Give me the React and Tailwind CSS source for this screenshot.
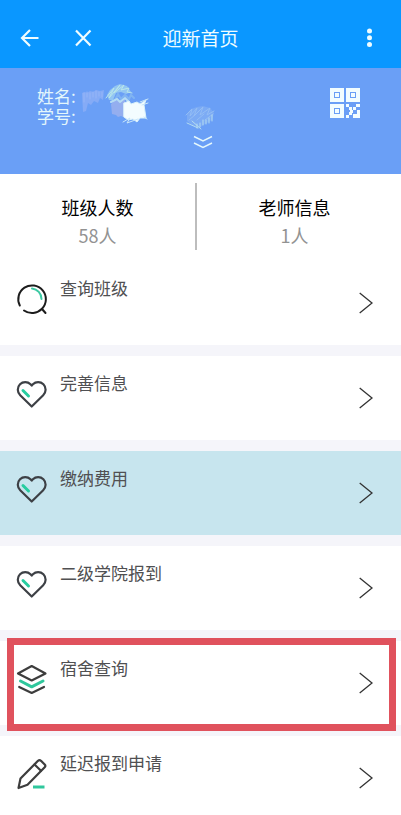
import React from "react";

const menus = [
     { name: "查询班级", icon: SearchIcon },
     { name: "完善信息", icon: HeartIcon },
     { name: "缴纳费用", icon: HeartIcon, active: true },
     { name: "二级学院报到", icon: HeartIcon },
     { name: "宿舍查询", icon: LayersIcon, marked: true },
     { name: "延迟报到申请", icon: PencilIcon },
];

function SearchIcon() {
     return (
          <svg viewBox="0 0 32 32" className="h-8 w-8" fill="none" stroke="#1c1c1c" strokeWidth="2" strokeLinecap="round">
               <path d="M3.800 22.500A13.800 13.800 0 1 1 26 25.800A13.800 13.800 0 0 1 8 27.500" />
               <path d="M26 26L29.500 30" />
               <path d="M16 5.500A10.500 10.500 0 0 1 25.500 16" stroke="#3cc9a3" strokeWidth="2" />
          </svg>
     )
}

function HeartIcon() {
     return (
          <svg viewBox="0 0 32 32" className="h-8 w-8" fill="none" stroke="#3d4045" strokeWidth="2.2" strokeLinecap="round" strokeLinejoin="round">
               <path d="M15.700 28.500L4.200 17.200A7.600 7.600 0 0 1 4 6.300A7.500 7.500 0 0 1 14.500 6.300L15.700 7.600L16.900 6.300A7.500 7.500 0 0 1 27.400 6.300A7.600 7.600 0 0 1 27.200 17.200Z" />
               <path d="M7 12.500L12.500 18" stroke="#27cda0" strokeWidth="3" />
          </svg>
     )
}

function LayersIcon() {
     return (
          <svg viewBox="0 0 32 32" className="h-8 w-8" fill="none" stroke="#3d3d3d" strokeWidth="2.2" strokeLinecap="round" strokeLinejoin="round">
               <path d="M15.700 3L29.500 10.500L15.700 17.500L2 10.500Z" />
               <path d="M4.500 18L15.700 23.800L27 18" stroke="#2fc79c" strokeWidth="3" />
               <path d="M3.200 24L15.700 30L28 24" />
          </svg>
     )
}

function PencilIcon() {
     return (
          <svg viewBox="0 0 32 32" className="h-8 w-8" fill="none" stroke="#3d3d3d" strokeWidth="2.2" strokeLinecap="round" strokeLinejoin="round">
               <path d="M2.500 30L4.500 20.500L22 2.800Q23.500 1.500 25 2.800L28.700 6.500Q30 8 28.700 9.300L11.500 26.800Z" />
               <path d="M18.500 6.500L25 12.800" />
               <path d="M17 29H28.500" stroke="#2fc79c" strokeWidth="3" strokeLinecap="butt" />
          </svg>
     )
}

function QrIcon() {
     return (
          <svg viewBox="0 0 30 30" className="h-[30px] w-[30px]" fill="#f2fdff" shapeRendering="crispEdges">
               <path fillRule="evenodd" d="M0 0H14V14H0ZM4 4V10H10V4ZM16 0H30V14H16ZM20 4V10H26V4ZM0 16H14V30H0ZM4 20V26H10V20Z" />
               <path d="M5 5H9V9H5ZM21 5H25V9H21ZM5 21H9V25H5Z" />
               <path d="M16 16H19V19H16ZM19 19H22V22H23V25H22V27H19V24H20V22H19ZM26 16H30V19H26ZM23 19H26V22H23ZM16 27H19V30H16ZM27 22H30V30H23V26H27Z" />
          </svg>
     )
}

/* brush strokes that hide the student's name and number */
function Scribble() {
     return (
          <svg viewBox="0 0 140 56" className="h-14 w-[140px]" fill="none" strokeLinecap="round">
               <path d="M2 13L5 12L7 13L10 11L13 12L16 10L20 11L24 10L23 20L20 18L18 23L14 21L11 25L8 23L6 31L3 32Z" fill="#85abf6" />
               <path d="M4 22V13M7 17V12M10 19V13M13 17V12M16 18V11M19 16V12M22 17V12" stroke="#95b5f7" strokeWidth="1" />
               <path d="M29 20L27 15L30 10L35 6L40 4L47 6L51 12L46 14L41 12L36 13L33 20Z" fill="#93c6f2" />
               <path d="M26 18L34 8L29 18L40 5L34 13L44 5L41 10L49 8L47 12L52 13" stroke="#b9e6ea" strokeWidth="1" />
               <path d="M35 20L38 14L41 19L45 15L49 19L51 15L54 18" stroke="#80b4f2" strokeWidth="2" />
               <path d="M31 24L34 21L45 20L45 38L41 36L38 37L36 35L32 34Z" fill="#94aeef" />
               <path d="M31 22L37 19L40 22L45 18L49 22" stroke="#b6dcf4" strokeWidth="2" />
               <path d="M44 23L49 21L51 24L57 22L60 24L66 20L64 25L66 38L60 38L57 42L53 39L48 40L44 37Z" fill="#f3fcff" stroke="#d9f1fb" strokeWidth="1" />
               <path d="M43 42L50 38L47 43L58 39M60 22L68 19M62 25L68 23M64 37L67 39" stroke="#c9e7fa" strokeWidth="1" />
               <path d="M107 34L111 29L117 27L123 26L130 28L134 33L132 40L125 44L119 48L112 45L107 41Z" fill="#7cabf4" />
               <path d="M106 35L112 29L110 36L117 28L114 36L123 27L120 35L130 28L127 35L134 31M109 40L115 35M117 40L124 34M125 40L133 34" stroke="#93bdf5" strokeWidth="1" />
               <path d="M107 43L118 48M112 41L121 49M117 44V48M120 43V47M123 40V45M126 40V44M129 38V43M132 35V41" stroke="#b4dcf0" strokeWidth="1" />
          </svg>
     )
}

function MenuRow({ menu }) {
     const Icon = menu.icon;
     return (
          <li className={menu.active ? "relative bg-[#c7e5ee]" : "relative bg-white"}>
               <button type="button" className="flex h-[84px] w-full items-center pr-7 pl-4 text-left hover:cursor-pointer">
                    <span className="self-start pt-[22px]"><Icon /></span>
                    <span className="ml-3 flex-1 self-start pt-[15px] text-[17px] leading-6 text-[#505052]">{menu.name}</span>
                    <svg viewBox="0 0 14 22" className="h-[22px] w-[14px]" fill="none" stroke="#333" strokeWidth="1.3">
                         <path d="M0.700 1L13 11L0.700 21" />
                    </svg>
               </button>
               {menu.marked && <div className="pointer-events-none absolute -top-[3px] right-[5px] -bottom-[6px] left-[7px] z-10 border-[7px] border-[#e0525d]"></div>}
          </li>
     )
}

export default function App() {
     return (
          <div className="min-h-screen bg-white font-['Noto_Sans_CJK_SC',sans-serif]">

               {/* top bar */}
               <header className="grid h-[68px] grid-cols-3 items-center bg-[#0a97ff] px-5 pt-2 text-[#effcff]">
                    <div className="flex items-center gap-[34px]">
                         <button type="button" aria-label="返回">
                              <svg viewBox="0 0 20 20" className="h-5 w-5" fill="none" stroke="currentColor" strokeWidth="2.2">
                                   <path d="M18.500 10H2M10 2L2 10L10 18" />
                              </svg>
                         </button>
                         <button type="button" aria-label="关闭">
                              <svg viewBox="0 0 20 20" className="h-5 w-5" fill="none" stroke="currentColor" strokeWidth="2.2">
                                   <path d="M2 2.500L16.500 17.500M16.500 2.500L2 17.500" />
                              </svg>
                         </button>
                    </div>
                    <h1 className="text-center text-[19px] leading-7">迎新首页</h1>
                    <button type="button" aria-label="更多" className="justify-self-end">
                         <svg viewBox="0 0 22 20" className="h-5 w-[22px]" fill="currentColor">
                              <circle cx="10.500" cy="3" r="2.500" />
                              <circle cx="10.500" cy="9.700" r="2.500" />
                              <circle cx="10.500" cy="16.400" r="2.500" />
                         </svg>
                    </button>
               </header>

               {/* student card */}
               <section className="relative h-[106px] bg-[#6a9ff6] text-[#e4f7fb]">
                    <div className="flex items-start justify-between pt-[18px] pr-[41px] pl-[37px]">
                         <p className="text-[17px] leading-5">姓名:<br />学号:</p>
                         <button type="button" aria-label="二维码" className="mt-[2px]"><QrIcon /></button>
                    </div>
                    <div className="absolute top-3 left-20"><Scribble /></div>
                    <button type="button" aria-label="展开" className="absolute top-[67px] left-1/2 -translate-x-1/2 pl-1">
                         <svg viewBox="0 0 20 14" className="h-[14px] w-5" fill="none" stroke="currentColor" strokeWidth="1.5">
                              <path d="M1 1.500L10 6L19 1.500M1 8L10 12.500L19 8" />
                         </svg>
                    </button>
               </section>

               {/* class and teacher count */}
               <section className="flex h-[87px] items-start pt-[9px] pr-[9px] text-center text-lg leading-7">
                    <div className="flex-1 pt-[10px]">
                         <p className="text-black">班级人数</p>
                         <p className="text-[#929292]">58人</p>
                    </div>
                    <div className="h-[67px] w-[2px] bg-[#bdbdbd]"></div>
                    <div className="flex-1 pt-[10px]">
                         <p className="text-black">老师信息</p>
                         <p className="text-[#929292]">1人</p>
                    </div>
               </section>

               <ul className="flex flex-col gap-[11px] bg-[#f5f5fa]">
                    {menus.map((menu) => (
                         <MenuRow key={menu.name} menu={menu} />
                    ))}
               </ul>

          </div>
     );
}
